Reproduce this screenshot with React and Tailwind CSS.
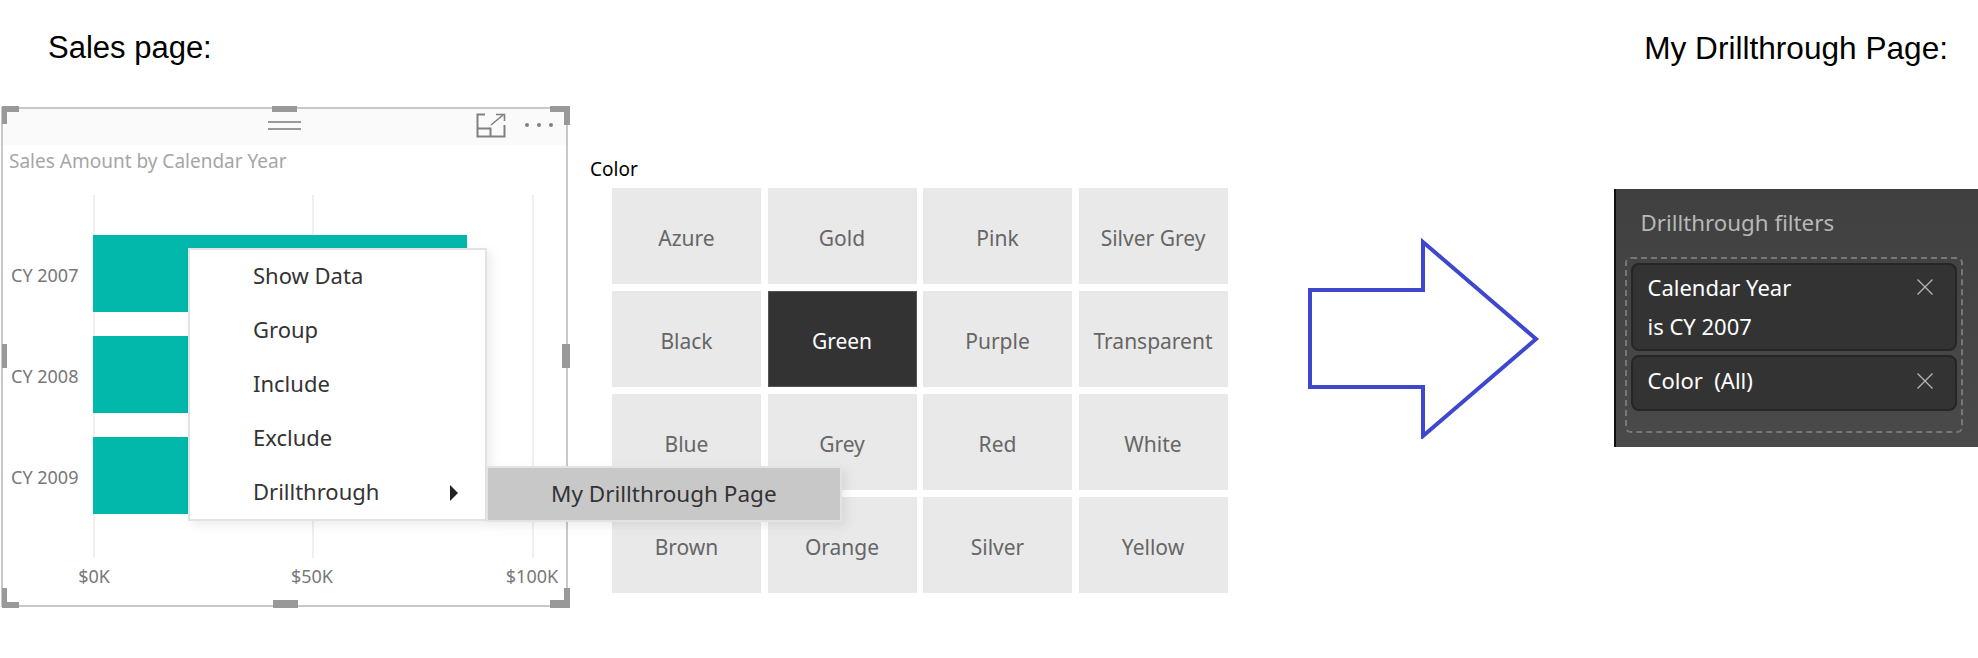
const colors = ['Azure', 'Gold', 'Pink', 'Silver Grey', 'Black', 'Green', 'Purple', 'Transparent', 'Blue', 'Grey', 'Red', 'White', 'Brown', 'Orange', 'Silver', 'Yellow']
const years = ['CY 2007', 'CY 2008', 'CY 2009']
const menuItems = ['Show Data', 'Group', 'Include', 'Exclude', 'Drillthrough']

const CloseIcon = () => (
  <svg width="16" height="16" viewBox="0 0 16 16" className="shrink-0">
    <path d="M0.5 0.5L15.5 15.5M15.5 0.5L0.5 15.5" stroke="#b5b5b5" strokeWidth="1.3" fill="none" />
  </svg>
)

const SalesCard = () => (
  <div className="relative w-[567px] h-[500px] border-2 border-[#c8c8c8] bg-white shrink-0">
    {/* header strip */}
    <div className="h-[36px] pb-[4px] bg-[#fafafa] flex items-center">
      <div className="ml-[265px] w-[33px] h-[9px] border-y-2 border-[#999]" />
      <svg width="30" height="25" viewBox="0 0 30 25" className="ml-[175px]">
        <path d="M9 1.5H1.5V23.5H28.5V12" stroke="#808080" strokeWidth="2" fill="none" />
        <path d="M1.5 15.5H14.5V23.5" stroke="#808080" strokeWidth="2" fill="none" />
        <path d="M15 12L27 2M20 1.5H28.5V8" stroke="#808080" strokeWidth="1.6" fill="none" />
      </svg>
      <div className="ml-[19px] flex gap-[8px]">
        <span className="w-[4px] h-[4px] rounded-full bg-[#808080]" />
        <span className="w-[4px] h-[4px] rounded-full bg-[#808080]" />
        <span className="w-[4px] h-[4px] rounded-full bg-[#808080]" />
      </div>
    </div>
    <div className="pl-[6px] h-[32px] text-[19px] leading-[32px] text-[#a6a6a6]">Sales Amount by Calendar Year</div>

    {/* chart */}
    <div className="relative h-[363px] mt-[18px]">
      <div className="absolute left-[90px] top-0 bottom-0 w-[2px] bg-[#efefef]" />
      <div className="absolute left-[309px] top-0 bottom-0 w-[2px] bg-[#efefef]" />
      <div className="absolute left-[529px] top-0 bottom-0 w-[2px] bg-[#efefef]" />
      <div className="relative flex flex-col pt-[40px] gap-[24px]">
        {years.map((year) => (
          <div key={year} className="flex items-center h-[77px]">
            <div className="w-[90px] pl-[8px] pt-[4px] text-[18px] text-[#777]">{year}</div>
            <div className="w-[374px] h-full bg-[#01b8aa]" />
          </div>
        ))}
      </div>
    </div>
    <div className="h-[36px] pl-[60px] flex text-[18px] leading-[36px] text-[#777]">
      <span className="w-[62px] shrink-0 text-center">$0K</span>
      <span className="ml-[156px] w-[62px] shrink-0 text-center">$50K</span>
      <span className="ml-[149px] w-[80px] shrink-0 text-center">$100K</span>
    </div>

    {/* selection handles */}
    <div className="absolute -left-[1px] -top-[3px] w-[17px] h-[6px] bg-[#999]" />
    <div className="absolute -left-[1px] -top-[3px] w-[5px] h-[18px] bg-[#999]" />
    <div className="absolute -right-[4px] -top-[3px] w-[20px] h-[6px] bg-[#999]" />
    <div className="absolute -right-[4px] -top-[3px] w-[6px] h-[19px] bg-[#999]" />
    <div className="absolute left-[269px] -top-[3px] w-[25px] h-[6px] bg-[#999]" />
    <div className="absolute -left-[1px] top-[235px] w-[5px] h-[24px] bg-[#999]" />
    <div className="absolute -right-[4px] top-[235px] w-[8px] h-[24px] bg-[#999]" />
    <div className="absolute -left-[1px] -bottom-[3px] w-[17px] h-[6px] bg-[#999]" />
    <div className="absolute -left-[1px] -bottom-[3px] w-[5px] h-[20px] bg-[#999]" />
    <div className="absolute -right-[4px] -bottom-[3px] w-[20px] h-[8px] bg-[#999]" />
    <div className="absolute -right-[4px] -bottom-[3px] w-[6px] h-[20px] bg-[#999]" />
    <div className="absolute left-[270px] -bottom-[3px] w-[25px] h-[8px] bg-[#999]" />

    {/* context menu */}
    <div className="absolute z-10 left-[185px] top-[139px] w-[299px] h-[273px] border-2 border-[#e3e3e3] bg-white shadow-[4px_4px_10px_rgba(0,0,0,0.08)] flex flex-col text-[#333] text-[22px]">
      {menuItems.map((item) => (
        <div key={item} className="h-[54px] shrink-0 pl-[63px] pb-[4px] flex items-center">
          {item}
          {item === 'Drillthrough' && (
            <span className="ml-auto mr-[27px] mt-[3px] w-0 h-0 border-y-[8px] border-y-transparent border-l-[8px] border-l-[#222]" />
          )}
        </div>
      ))}
    </div>
    <div className="absolute z-20 left-[483px] top-[357px] w-[356px] h-[56px] border-2 border-[#e3e3e3] bg-[#c8c8c8] shadow-[4px_4px_10px_rgba(0,0,0,0.08)] pl-[63px] pb-[1px] flex items-center text-[#333] text-[22.5px]">
      My Drillthrough Page
    </div>
  </div>
)

const ColorSlicer = () => (
  <div className="ml-[22px] shrink-0">
    <div className="h-[81px] pt-[49px] text-[19px] leading-[26px] text-black">Color</div>
    <div className="ml-[22px] grid grid-cols-[repeat(4,149px)] auto-rows-[96px] gap-x-[6.5px] gap-y-[7px]">
      {colors.map((color) => (
        <div
          key={color}
          className={
            color === 'Green'
              ? 'flex items-center justify-center pt-[5px] bg-[#333] border border-[#555] text-white text-[21px]'
              : 'flex items-center justify-center pt-[5px] bg-[#e9e9e9] text-[#666] text-[21px]'
          }
        >
          {color}
        </div>
      ))}
    </div>
  </div>
)

const FilterPanel = () => (
  <div className="mt-[82px] ml-[69px] w-[369px] h-[258px] shrink-0 border-x-2 border-[#111] bg-gradient-to-b from-[#404040] to-[#4a4a4a] pl-[9px] pr-[11px]">
    <div className="h-[68px] pl-[16px] pt-[16px] text-[22.3px] leading-[36px] text-[#b8b8b8]">Drillthrough filters</div>
    <div className="w-[338px] h-[176px] rounded-[6px] border-2 border-dashed border-[#777] p-[4px] flex flex-col gap-[4px] text-white text-[22px]">
      <div className="h-[88px] rounded-[8px] border-2 border-[#262626] bg-[#333] pl-[15px] pr-[22px]">
        <div className="flex items-center justify-between h-[44px]">
          Calendar Year
          <CloseIcon />
        </div>
        <div className="leading-[34px]">is CY 2007</div>
      </div>
      <div className="h-[56px] rounded-[8px] border-2 border-[#262626] bg-[#333] pl-[15px] pr-[22px] pb-[5px] flex items-center justify-between">
        <span>Color&nbsp; (All)</span>
        <CloseIcon />
      </div>
    </div>
  </div>
)

export default function App() {
  return (
    <div className="w-[1978px] h-[658px] bg-white overflow-hidden font-['Noto_Sans',sans-serif]">
      <div className="h-[107px] pl-[48px] pr-[30px] pt-[30px] flex justify-between items-start text-[31px] leading-[36px] text-black">
        <span className="font-['Liberation_Sans',sans-serif]">Sales page:</span>
        <span className="text-[31.6px] font-['Liberation_Sans',sans-serif]">My Drillthrough Page:</span>
      </div>
      <div className="flex items-start pl-[1px]">
        <SalesCard />
        <ColorSlicer />
        <svg width="240" height="204" viewBox="0 0 240 204" className="mt-[128px] ml-[77px] shrink-0">
          <path d="M5 55H118V7L231 104L118 201V152H5Z" stroke="#3f48cc" strokeWidth="4" fill="none" strokeLinejoin="miter" />
        </svg>
        <FilterPanel />
      </div>
    </div>
  )
}
